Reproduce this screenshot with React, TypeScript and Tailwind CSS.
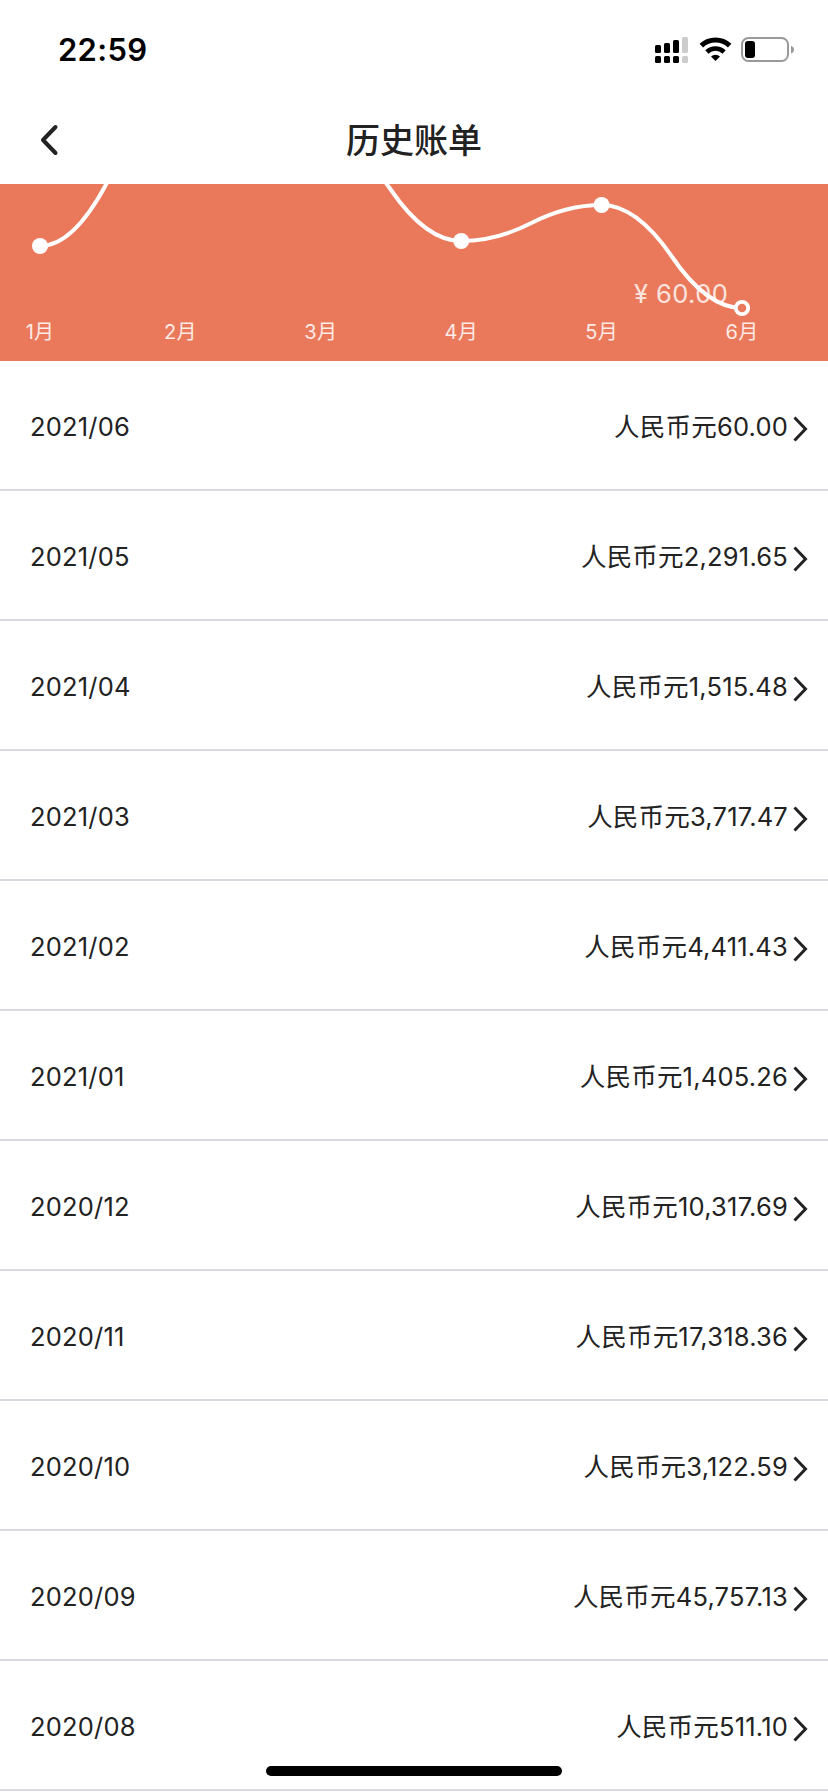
interface Bill {
  month: string;
  amount: string;
}

interface Point {
  label: string;
  x: number;
  y: number;
}

const bills: Bill[] = [
  { month: '2021/06', amount: '60.00' },
  { month: '2021/05', amount: '2,291.65' },
  { month: '2021/04', amount: '1,515.48' },
  { month: '2021/03', amount: '3,717.47' },
  { month: '2021/02', amount: '4,411.43' },
  { month: '2021/01', amount: '1,405.26' },
  { month: '2020/12', amount: '10,317.69' },
  { month: '2020/11', amount: '17,318.36' },
  { month: '2020/10', amount: '3,122.59' },
  { month: '2020/09', amount: '45,757.13' },
  { month: '2020/08', amount: '511.10' },
];

const points: Point[] = [
  { label: '1月', x: 40, y: 62 },
  { label: '2月', x: 180.4, y: -77 },
  { label: '3月', x: 320.8, y: -45 },
  { label: '4月', x: 461.2, y: 57 },
  { label: '5月', x: 601.6, y: 21 },
  { label: '6月', x: 742, y: 124 },
];

const linePath = points.reduce((path, p, i) => {
  if (i === 0) return `M${p.x} ${p.y}`;
  const prev = points[i - 1];
  const midX = (prev.x + p.x) / 2;
  const midY = (prev.y + p.y) / 2;
  return `${path} Q${(prev.x + midX) / 2} ${prev.y} ${midX} ${midY} Q${(p.x + midX) / 2} ${p.y} ${p.x} ${p.y}`;
}, '');

function StatusBar() {
  return (
    <div className="flex h-[98px] items-center justify-between pl-[58px] pr-[33px]">
      <span className="text-[31px] font-semibold leading-none tracking-[0.3px] text-black">22:59</span>
      <svg className="h-[30px] w-[142px]" viewBox="653 34 142 30" fill="none">
        {/* Signal */}
        <g fill="#000">
          <rect x="655" y="45" width="6" height="8" rx="1.5" />
          <rect x="664" y="43" width="6" height="10" rx="1.5" />
          <rect x="673" y="40" width="6" height="13" rx="1.5" />
          <rect x="655" y="56" width="6" height="7" rx="1.5" />
          <rect x="664" y="56" width="6" height="7" rx="1.5" />
          <rect x="673" y="56" width="6" height="7" rx="1.5" />
        </g>
        <rect x="682" y="37" width="6" height="16" rx="1.5" fill="#ccc" />
        <rect x="682" y="56" width="6" height="7" rx="1.5" fill="#ccc" />
        {/* Wifi */}
        <path d="M701.3 45.6a20.5 20.5 0 0 1 28.4 0" stroke="#000" strokeWidth="5" />
        <path d="M706.9 52a12.4 12.4 0 0 1 17.2 0" stroke="#000" strokeWidth="4.6" />
        <path d="M711 56.6a6.5 6.5 0 0 1 9 0L715.5 61z" fill="#000" />
        {/* Battery */}
        <rect x="742" y="38" width="46" height="23" rx="6.5" stroke="#999" strokeWidth="2" />
        <rect x="745" y="41" width="10" height="17" rx="3" fill="#000" />
        <path d="M791 46c4 1 4 6.5 0 7.5z" fill="#999" />
      </svg>
    </div>
  );
}

function Header() {
  return (
    <header className="grid h-[86px] grid-cols-[100px_1fr_100px] items-center pb-0.5">
      <svg className="ml-10 h-8 w-5" viewBox="0 0 20 32" fill="none">
        <path d="M15.5 3L3 16l12.5 13" stroke="#222" strokeWidth="4" strokeLinecap="round" strokeLinejoin="round" />
      </svg>
      <h1 className="pt-0.5 text-center text-[34px] font-medium leading-none text-[#222]">历史账单</h1>
    </header>
  );
}

function Chart() {
  const last = points[points.length - 1];

  return (
    <svg className="block h-[177px] w-full bg-[#ea785a]" viewBox="0 0 828 177">
      <text x="634" y="119" className="fill-white/80 text-[25.5px] tracking-[0.4px]">
        ¥ 60.00
      </text>
      <path d={linePath} fill="none" stroke="#fff" strokeWidth="4" />
      {points.slice(0, -1).map((p) => (
        <circle key={p.label} cx={p.x} cy={p.y} r="8" fill="#fff" />
      ))}
      <circle cx={last.x} cy={last.y} r="6.2" fill="#ea785a" stroke="#fff" strokeWidth="3.8" />
      {points.map((p) => (
        <text key={p.label} x={p.x} y="155" textAnchor="middle" className="fill-white/85 text-[20px] tracking-[0.3px]">
          {p.label}
        </text>
      ))}
    </svg>
  );
}

function BillRow({ month, amount }: Bill) {
  return (
    <li className="flex h-[130px] items-center border-b-2 border-[#d9d9df] pl-[30px] pr-5 pt-1 text-[25.5px] leading-none tracking-[0.2px] text-[#222]">
      <span>{month}</span>
      <span className="ml-auto">人民币元{amount}</span>
      <svg className="ml-1 mt-1 h-7 w-4" viewBox="0 0 16 28" fill="none">
        <path d="M2.5 2.5L13.5 14l-11 11.5" stroke="#222" strokeWidth="3" />
      </svg>
    </li>
  );
}

export default function App() {
  return (
    <div className="relative h-[1792px] w-[828px] overflow-hidden bg-white font-['Inter','Noto_Sans_CJK_SC',sans-serif]">
      <StatusBar />
      <Header />
      <Chart />
      <ul>
        {bills.map((bill) => (
          <BillRow key={bill.month} {...bill} />
        ))}
      </ul>
      {/* Home indicator */}
      <div className="absolute bottom-4 left-1/2 h-2.5 w-[296px] -translate-x-1/2 rounded-full bg-black"></div>
    </div>
  );
}
